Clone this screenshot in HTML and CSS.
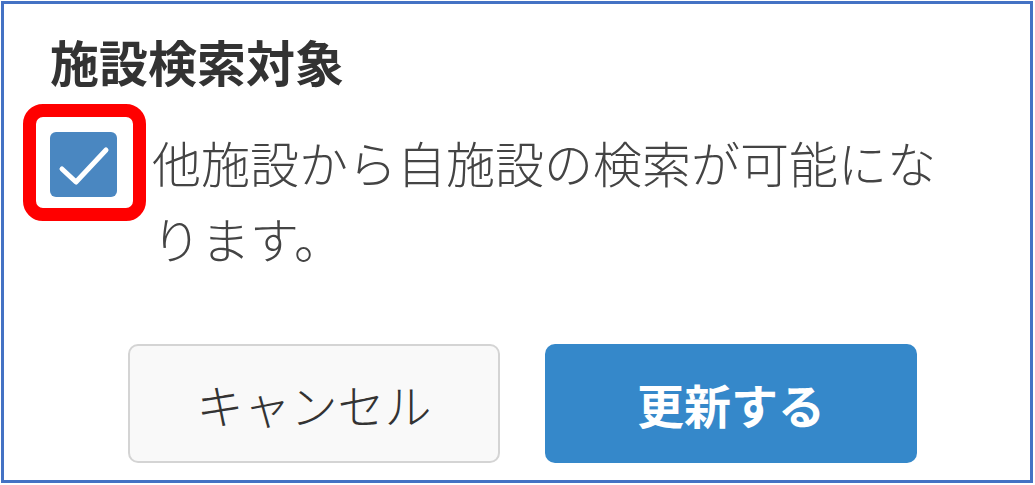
FILE: index.html
```html
<!DOCTYPE html>
<html lang="ja">
<head>
    <meta charset="UTF-8">
    <meta name="viewport" content="width=device-width, initial-scale=1.0">
    <title>施設検索対象</title>
    <link rel="stylesheet" href="styles.css">
</head>
<body>
    <div class="dialog">
        <h2 class="dialog-title">施設検索対象</h2>

        <div class="option-row">
            <div class="highlight">
                <div class="checkbox">
                    <svg width="67" height="65" viewBox="0 0 67 65">
                        <polyline points="12,37 26,50 56,18" fill="none" stroke="#fff" stroke-width="5" stroke-linecap="round" stroke-linejoin="round"/>
                    </svg>
                </div>
            </div>
            <p class="option-text">他施設から自施設の検索が可能になります。</p>
        </div>

        <div class="actions">
            <button class="btn btn-cancel">キャンセル</button>
            <button class="btn btn-primary">更新する</button>
        </div>
    </div>
</body>
</html>
```

FILE: styles.css
```css
* {
    margin: 0;
    padding: 0;
    box-sizing: border-box;
    font-family: "Noto Sans CJK JP", "Noto Sans", sans-serif;
}

body {
    background-color: #fff;
    overflow: hidden;
}

.dialog {
    width: 1032px;
    height: 482px;
    margin: 1px;
    border: 3px solid #4472c4;
    background: #fff;
    display: flex;
    flex-direction: column;
}

.dialog-title {
    margin-top: 27px;
    padding-left: 46px;
    font-size: 49px;
    line-height: 59px;
    font-weight: bold;
    color: #333;
}

.option-row {
    display: flex;
    align-items: flex-start;
    margin-top: 14px;
    margin-left: 19px;
}

.highlight {
    border: 13px solid #ff0000;
    border-radius: 20px;
    padding: 15px 16px 11px 14px;
    flex-shrink: 0;
}

.checkbox {
    width: 67px;
    height: 65px;
    border-radius: 6px;
    background-color: #4a87c1;
}

.checkbox svg {
    display: block;
}

.option-text {
    width: 800px;
    margin-left: 6px;
    margin-top: 20px;
    font-size: 49px;
    font-weight: 300;
    line-height: 76px;
    color: #444;
}

.actions {
    display: flex;
    gap: 45px;
    margin-top: 68px;
    padding-left: 124px;
}

.btn {
    width: 372px;
    height: 119px;
    border-radius: 10px;
    font-size: 47px;
    cursor: pointer;
}

.btn-cancel {
    background-color: #f9f9f9;
    border: 2px solid #d4d4d4;
    color: #333;
    font-weight: 300;
}

.btn-primary {
    background-color: #3588ca;
    border: none;
    color: #fff;
    font-weight: bold;
}
```
